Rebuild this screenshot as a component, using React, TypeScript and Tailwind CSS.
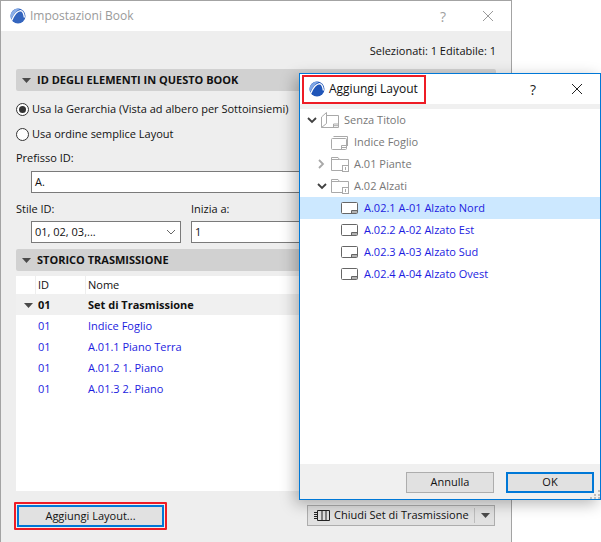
import React from "react";

const font = { fontFamily: '"Open Sans", sans-serif' };

function Logo({ faded }: { faded?: boolean }) {
  return (
    <svg width="16" height="16" viewBox="0 0 16 16" className={faded ? "shrink-0 opacity-90" : "shrink-0"}>
      <circle cx="8" cy="8" r="7.5" fill="#1f55b8" />
      <path d="M1.2 11 A7.5 7.5 0 0 1 10 .8 C6.5 2.5 3.5 6.5 1.2 11Z" fill="#7ea6e6" />
      <path d="M1.8 12.2 C4 7 7.5 3 10.5 2.6 C12.8 3 14 6 14.4 9.5" stroke="#fff" strokeWidth="1.4" fill="none" />
    </svg>
  );
}

function Tri() {
  return (
    <svg width="9" height="5" viewBox="0 0 9 5" className="shrink-0">
      <path d="M0 0H9L4.5 5Z" fill="#4a4a4a" />
    </svg>
  );
}

function Section({ title }: { title: string }) {
  return (
    <div className="flex h-[22px] items-center gap-[6px] rounded-[2px] bg-[#d1d1d1] pl-[6px] text-[11px] font-bold text-[#111]">
      <Tri />
      <span>{title}</span>
    </div>
  );
}

function Radio({ on, label }: { on?: boolean; label: string }) {
  return (
    <div className="flex h-[14px] items-center gap-[3px] text-[11px] text-[#111]">
      <span className="flex h-[13px] w-[13px] items-center justify-center rounded-full border border-[#333] bg-white">
        {on && <span className="h-[7px] w-[7px] rounded-full bg-[#333]" />}
      </span>
      <span>{label}</span>
    </div>
  );
}

function Chevron({ open, light }: { open: boolean; light?: boolean }) {
  const c = light ? "#a8a8a8" : "#404040";
  return (
    <svg width="10" height="10" viewBox="0 0 10 10" className="shrink-0">
      {open ? (
        <path d="M1 3 L5 7 L9 3" stroke={c} strokeWidth="1.8" fill="none" />
      ) : (
        <path d="M3 1 L7 5 L3 9" stroke={c} strokeWidth="1.8" fill="none" />
      )}
    </svg>
  );
}

function SheetIcon() {
  const c = "#666";
  return (
    <svg width="18" height="14" viewBox="0 0 18 14" className="shrink-0">
      <rect x="0.5" y="1.5" width="16" height="11" rx="1" fill="#fff" stroke={c} />
      <path d="M10.5 12.5V9.5H16.5M10.5 11H16.5" stroke={c} fill="none" />
    </svg>
  );
}

function StackSheetIcon() {
  const c = "#a9a9a9";
  return (
    <svg width="18" height="15" viewBox="0 0 18 15" className="shrink-0">
      <path d="M2.5 1.5H16.5V11" stroke={c} fill="none" />
      <rect x="0.5" y="3.5" width="15" height="11" rx="1" fill="#fff" stroke={c} />
      <path d="M10.5 14V10.5H15.5M10.5 12.5H15.5" stroke={c} fill="none" />
    </svg>
  );
}

function FolderIcon() {
  const c = "#a9a9a9";
  return (
    <svg width="18" height="16" viewBox="0 0 18 16" className="shrink-0">
      <path d="M0.5 14.5V1.5H7L8.5 3.5H17.5V14.5Z" fill="#fff" stroke={c} />
      <path d="M0.5 3.5H8.5" stroke={c} />
      <rect x="11.5" y="9.5" width="6" height="6" fill="#fff" stroke={c} />
      <path d="M14.5 11V14" stroke={c} />
    </svg>
  );
}

function BookIcon() {
  const c = "#a9a9a9";
  return (
    <svg width="18" height="17" viewBox="0 0 18 17" className="shrink-0">
      <path d="M0.5 5 L5.5 0.5 V11.5 L0.5 15.5Z" fill="#fff" stroke={c} />
      <path d="M5.5 3.5H17.5V15.5H0.5" stroke={c} fill="none" />
      <path d="M12.5 15.5V12H17.5M12.5 13.7H17.5" stroke={c} fill="none" />
    </svg>
  );
}

function TableRow({ id, name, kind }: { id: string; name: string; kind?: "group" }) {
  const group = kind === "group";
  return (
    <div className={group ? "flex h-[21px] items-center bg-[#f0f0f0] pt-[2px] font-bold text-[#111]" : "flex h-[21px] items-center pt-[2px] text-[#1c1ce0]"}>
      <div className="flex w-[22px] justify-center pl-[2px]">{group && <Tri />}</div>
      <div className="w-[50px]">{id}</div>
      <div>{name}</div>
    </div>
  );
}

function TreeRow({ indent, chevron, icon, text, blue, selected, muted }: {
  indent: string; chevron?: React.ReactNode; icon: React.ReactNode; text: string; blue?: boolean; selected?: boolean; muted?: boolean;
}) {
  return (
    <div className={selected ? "flex h-[22px] items-center bg-[#cce8ff]" : "flex h-[22px] items-center"}>
      <div className={indent + " flex items-center"}>
        {chevron}
      </div>
      {icon}
      <span className={blue ? "ml-[5px] text-[#1c1ce0]" : muted ? "ml-[5px] text-[#777]" : "ml-[5px]"}>{text}</span>
    </div>
  );
}

export default function App() {
  return (
    <div className="relative h-[542px] w-[601px] overflow-hidden bg-white text-[11px]" style={font}>
      {/* Main window */}
      <div className="flex h-[542px] w-[512px] flex-col border-x border-t border-[#a3a3a3] bg-[#eeeeee]">
        <div className="flex h-[30px] shrink-0 items-center bg-white pl-[9px] pr-[17px]">
          <Logo faded />
          <span className="ml-[4px] text-[12px] text-[#9a9a9a]">Impostazioni Book</span>
          <span className="ml-auto text-[14px] text-[#a0a0a0]">?</span>
          <svg width="12" height="12" viewBox="0 0 12 12" className="ml-[36px]">
            <path d="M1 1L11 11M11 1L1 11" stroke="#9a9a9a" strokeWidth="1" fill="none" />
          </svg>
        </div>
        <div className="flex min-h-0 flex-1 flex-col px-[15px]">
          <div className="mt-[11px] h-[17px] text-right leading-[17px] text-[#111]">Selezionati: 1 Editabile: 1</div>
          <div className="mt-[10px]"><Section title="ID DEGLI ELEMENTI IN QUESTO BOOK" /></div>
          <div className="mt-[11px]"><Radio on label="Usa la Gerarchia (Vista ad albero per Sottoinsiemi)" /></div>
          <div className="mt-[11px]"><Radio label="Usa ordine semplice Layout" /></div>
          <div className="mt-[9px] h-[16px] leading-[16px] text-[#111]">Prefisso ID:</div>
          <div className="ml-[15px] mt-[5px] flex h-[22px] items-center border border-[#7a7a7a] bg-white pl-[3px] text-[#111]">A.</div>
          <div className="mt-[8px] flex gap-[10px] pl-0">
            <div className="flex w-[165px] flex-col">
              <div className="h-[16px] leading-[16px] text-[#111]">Stile ID:</div>
              <div className="ml-[15px] mt-[4px] flex h-[22px] items-center justify-between border border-[#7a7a7a] bg-white px-[3px] text-[#111]">
                <span>01, 02, 03,...</span>
                <svg width="10" height="6" viewBox="0 0 10 6" className="mr-[1px]"><path d="M1 1L5 5L9 1" stroke="#666" fill="none" /></svg>
              </div>
            </div>
            <div className="flex flex-1 flex-col">
              <div className="h-[16px] leading-[16px] text-[#111]">Inizia a:</div>
              <div className="mt-[4px] flex h-[22px] items-center border border-[#7a7a7a] bg-white pl-[3px] text-[#111]">1</div>
            </div>
          </div>
          <div className="mt-[6px]"><Section title="STORICO TRASMISSIONE" /></div>
          <div className="mt-[5px] h-[215px] bg-white">
            <div className="flex h-[18px] items-center text-[#111]">
              <div className="h-full w-[20px] border-r border-[#eee]" />
              <div className="h-full w-[50px] border-r border-[#eee] pl-[2px] leading-[18px]">ID</div>
              <div className="pl-[2px]">Nome</div>
            </div>
            <TableRow kind="group" id="01" name="Set di Trasmissione" />
            <TableRow id="01" name="Indice Foglio" />
            <TableRow id="01" name="A.01.1 Piano Terra" />
            <TableRow id="01" name="A.01.2 1. Piano" />
            <TableRow id="01" name="A.01.3 2. Piano" />
          </div>
          <div className="-ml-[2px] mr-[1px] mt-[11px] flex items-start justify-between">
            <div className="rounded-[1px] border-2 border-[#ee1c25] p-[1px]">
              <button className="h-[22px] w-[147px] border-2 border-[#0078d7] bg-[#e1e1e1] text-[#111]">Aggiungi Layout...</button>
            </div>
            <div className="mt-[3px] flex h-[21px] w-[188px] items-center whitespace-nowrap border border-[#adadad] bg-[#e1e1e1] pl-[6px] text-[#111]">
              <svg width="16" height="11" viewBox="0 0 16 11" className="shrink-0">
                <path d="M3.5 .5H15.5V10.5H3.5ZM8 .5V10.5M12 .5V10.5M0 2.5H3.5M0 4.5H3.5M0 6.5H3.5M0 8.5H3.5" stroke="#222" fill="none" />
              </svg>
              <span className="ml-[4px] w-[135px]">Chiudi Set di Trasmissione</span>
              <span className="ml-[5px] h-[15px] w-px bg-[#bdbdbd]" />
              <span className="ml-[6px]"><Tri /></span>
            </div>
          </div>
        </div>
      </div>

      {/* Floating dialog */}
      <div className="absolute left-[299px] top-[73px] flex h-[427px] w-[302px] flex-col border border-[#0078d7] bg-white shadow-[-4px_4px_14px_rgba(0,0,0,0.28)]">
        <div className="flex h-[30px] shrink-0 items-center pr-[17px]">
          <div className="ml-[2px] flex h-[29px] w-[124px] items-center border-2 border-[#ee1c25] pl-[5px]">
            <Logo />
            <span className="ml-[4px] text-[12px] text-[#111]">Aggiungi Layout</span>
          </div>
          <span className="ml-auto text-[14px] text-[#222]">?</span>
          <svg width="12" height="12" viewBox="0 0 12 12" className="ml-[35px]">
            <path d="M1 1L11 11M11 1L1 11" stroke="#222" strokeWidth="1" fill="none" />
          </svg>
        </div>
        <div className="h-[5px] shrink-0 bg-[#f0f0f0]" />
        <div className="min-h-0 flex-1">
          <TreeRow muted indent="w-[21px] pl-[7px]" chevron={<Chevron open />} icon={<BookIcon />} text="Senza Titolo" />
          <TreeRow muted indent="w-[31px]" icon={<StackSheetIcon />} text="Indice Foglio" />
          <TreeRow muted indent="w-[31px] pl-[16px]" chevron={<Chevron open={false} light />} icon={<FolderIcon />} text="A.01 Piante" />
          <TreeRow muted indent="w-[31px] pl-[17px]" chevron={<Chevron open />} icon={<FolderIcon />} text="A.02 Alzati" />
          <TreeRow selected blue indent="w-[41px]" icon={<SheetIcon />} text="A.02.1 A-01 Alzato Nord" />
          <TreeRow blue indent="w-[41px]" icon={<SheetIcon />} text="A.02.2 A-02 Alzato Est" />
          <TreeRow blue indent="w-[41px]" icon={<SheetIcon />} text="A.02.3 A-03 Alzato Sud" />
          <TreeRow blue indent="w-[41px]" icon={<SheetIcon />} text="A.02.4 A-04 Alzato Ovest" />
        </div>
        <div className="relative flex h-[35px] shrink-0 items-start justify-end gap-[12px] bg-[#f0f0f0] pr-[6px] pt-[8px] text-[#111]">
          <button className="h-[21px] w-[88px] border border-[#adadad] bg-[#e1e1e1]">Annulla</button>
          <button className="h-[21px] w-[88px] border-2 border-[#0078d7] bg-[#e1e1e1]">OK</button>
          <svg width="10" height="10" viewBox="0 0 10 10" className="absolute bottom-0 right-0">
            <path d="M8 1h2v2H8zM4 5h2v2H4zM8 5h2v2H8zM0 8h2v2H0zM4 8h2v2H4zM8 8h2v2H8z" fill="#bdbdbd" />
          </svg>
        </div>
      </div>
    </div>
  );
}
